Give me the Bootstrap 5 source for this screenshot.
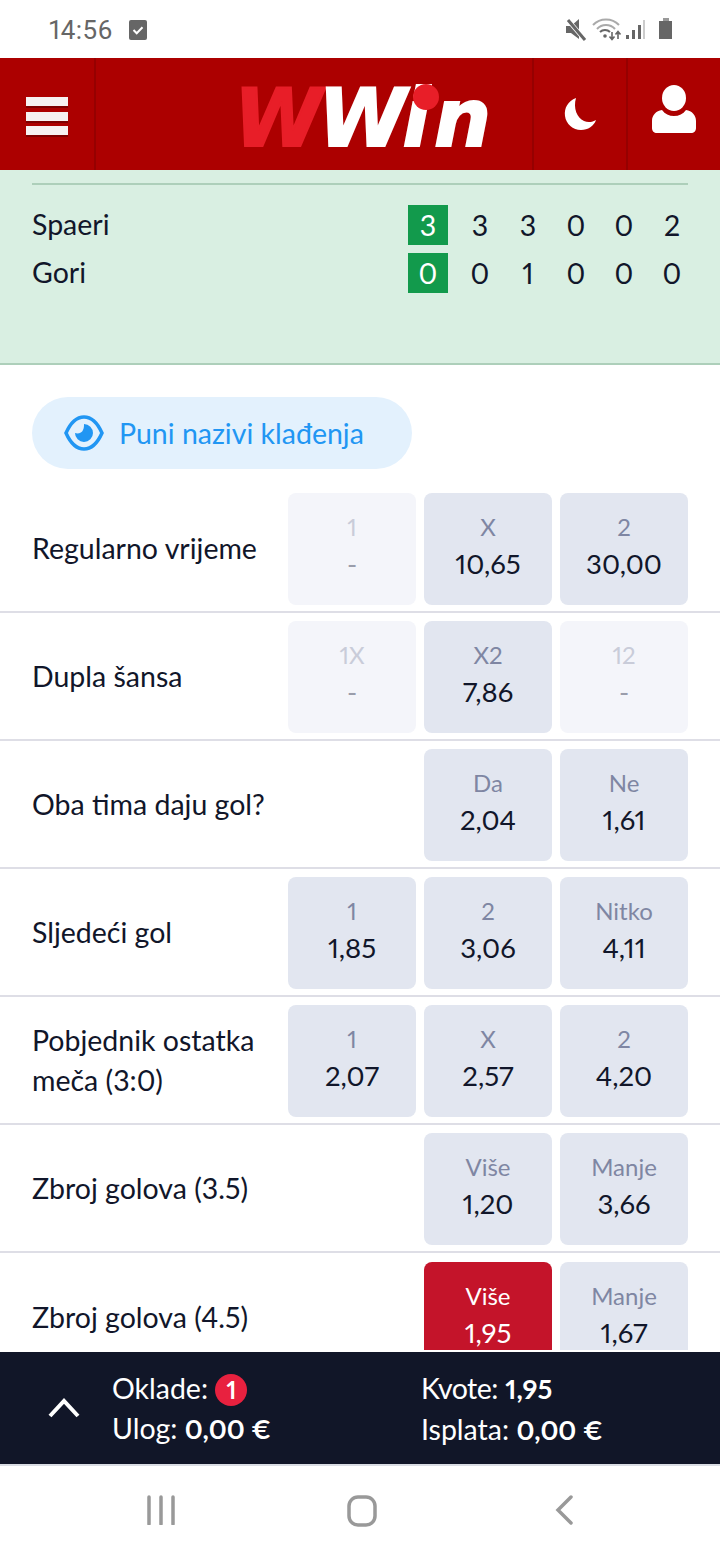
<!DOCTYPE html>
<html lang="hr">
<head>
  <meta charset="UTF-8" />
  <meta name="viewport" content="width=device-width, initial-scale=1.0" />
  <title>WWin</title>
  <link href="https://cdn.jsdelivr.net/npm/bootstrap@5.3.3/dist/css/bootstrap.min.css" rel="stylesheet">
  <style>
    html, body { height: 1560px; overflow: hidden; }
    body { width: 720px; font-family: Lato, "Noto Sans", sans-serif; font-size: 28.5px; line-height: 40px; font-variant-numeric: proportional-nums; color: #11162a; background: #fff; }

    .status-bar { height: 58px; padding: 2px 47px 0 49px; color: #666; font-family: Roboto, sans-serif; font-size: 26px; letter-spacing: .4px; }
    .status-bar svg { display: block; }

    .top-bar { height: 112px; background: #ac0000; }
    .top-cell { width: 94px; height: 112px; flex: none; border-left: 2px solid #960000; }
    .top-cell.menu { border-left: 0; }
    .brand-cell { flex: 1; border-left: 2px solid #960000; padding-left: 138px; }
    .brand { position: relative; display: block; margin-top: 10px; font-family: "DejaVu Sans", sans-serif; font-weight: 700; font-style: italic; font-size: 80px; line-height: 60px; letter-spacing: -4px; color: #fff; -webkit-text-stroke: 2px currentColor; }
    .brand b { color: #e81e28; font-weight: 700; }
    .brand em { letter-spacing: 4px; }
    .brand i { position: absolute; left: 179px; top: -5px; width: 26px; height: 26px; border-radius: 50%; background: #e81e28; }
    .menu svg { margin: 6px 0 0 26px; }
    .user-icon { margin-bottom: 10px; }

    .score-panel { height: 195px; background: #d9efe2; border-bottom: 2px solid #adcfba; padding: 13px 32px 0; }
    .score-line { height: 2px; background: #adcfba; margin-bottom: 20px; }
    .score-row { height: 40px; margin-bottom: 8px; margin-right: -8px; }
    .score-name { flex: 1; margin-top: -1px; }
    .score-box { width: 40px; height: 40px; margin-right: 8px; background: #129a4c; color: #fff; text-align: center; }
    .score-num { width: 48px; text-align: center; }

    .names-btn { width: 380px; height: 72px; margin: 32px 0 16px 32px; padding-left: 32px; gap: 15px; border-radius: 36px; background: #e3f1fd; color: #2196f3; }

    .markets { flex: 1; min-height: 0; overflow: hidden; margin-bottom: 2px; }
    .market-row { height: 128px; padding: 0 32px; border-bottom: 2px solid #dedee6; }
    .market-row:last-child { border-bottom: 0; }
    .market-name { flex: 1; line-height: 40px; }
    .odds { width: 128px; height: 112px; flex: none; margin: 8px 0 6px 8px; padding-top: 16px; border-radius: 8px; background: #e2e6f0; text-align: center; font-size: 27.500px; line-height: 38px; }
    .odds span { display: block; font-size: 24px; line-height: 36px; color: #7f86a3; }
    .odds.off { background: #f4f5fa; color: #9a9dab; }
    .odds.off span { color: #c9ccd9; }
    .odds.picked { background: #c4142a; color: #fff; }
    .odds.picked span { color: #fff; }

    .slip-bar { height: 114px; flex: none; background: #111628; color: #fff; border-bottom: 2px solid #dadde4; padding-top: 16px; }
    .slip-arrow { width: 112px; flex: none; padding: 30px 0 0 48px; }
    .slip-col { width: 309px; flex: none; }
    .slip-bar b { font-weight: 700; font-size: 27px; }
    .slip-tight { letter-spacing: -.5px; }
    .slip-count { display: inline-block; width: 32px; height: 32px; border-radius: 50%; background: #e8213f; font-size: 24px; font-weight: 700; line-height: 32px; text-align: center; }

    .nav-bar { height: 94px; flex: none; padding: 29px 0 0 147px; }
    .nav-bar svg { display: block; }
    .nav-home { margin-left: 172px; }
    .nav-back { margin-left: 178px; }
  </style>
</head>
<body class="d-flex flex-column">

  <div class="status-bar d-flex align-items-center flex-shrink-0">
    <span>14:56</span>
    <svg class="ms-3" width="18" height="20" viewBox="0 0 18 20"><rect width="18" height="20" rx="2" fill="#666"/><path d="M4.500 10l3.200 3.200 5.800-6" fill="none" stroke="#fff" stroke-width="2"/></svg>
    <svg class="ms-auto" width="108" height="24" viewBox="0 0 108 24">
      <path d="M1 8h5l8-7v20l-8-6H1z" fill="#666"/><path d="M2 1l18 21" stroke="#fff" stroke-width="4.500"/><path d="M3 2l17 20" stroke="#666" stroke-width="3"/>
      <path d="M28 7a18 18 0 0 1 26 0M32 11a12 12 0 0 1 18 0" fill="none" stroke="#aaa" stroke-width="2"/><path d="M35 14a7 7 0 0 1 10 0" fill="none" stroke="#666" stroke-width="2"/><circle cx="40" cy="18" r="1.800" fill="#666"/>
      <path d="M47 14v7M44.500 18.500l2.500 3 2.500-3M53 21v-7M50.500 16.500l2.500-3 2.500 3" fill="none" stroke="#666" stroke-width="1.600"/>
      <path d="M61 17h3v4h-3zM67 12h3v9h-3zM73 7h3v14h-3z" fill="#666"/><path d="M78 2h2v19h-2z" fill="#ccc"/>
      <path d="M98 0h6v3h-6z" fill="#999"/><path d="M94 3h13v18H94z" fill="#666"/>
    </svg>
  </div>

  <header class="top-bar d-flex flex-shrink-0">
    <div class="top-cell menu d-flex align-items-center">
      <svg width="42" height="42" viewBox="0 0 42 42"><path d="M0 1h42v9H0zM0 16h42v9H0zM0 30h42v9H0z" fill="#7d0000" transform="translate(0 2)"/><path d="M0 1h42v9H0zM0 16h42v9H0zM0 30h42v9H0z" fill="#f6f1f1"/></svg>
    </div>
    <div class="brand-cell d-flex align-items-center">
      <span class="brand"><b>W</b>W<em>i</em>n<i></i></span>
    </div>
    <div class="top-cell d-flex align-items-center justify-content-center">
      <svg width="34" height="34" viewBox="0 0 34 34"><path d="M13 1C5 4 1 11 2 19c1 8 8 14 16 14 7 0 13-4 15-10-3 2-8 3-12 1C14 21 10 11 13 1z" fill="#fff"/></svg>
    </div>
    <div class="top-cell d-flex align-items-center justify-content-center">
      <svg class="user-icon" width="44" height="48" viewBox="0 0 44 48"><ellipse cx="22" cy="13" rx="12" ry="13" fill="#fff"/><path d="M10 25c3 4 7 6 12 6s9-2 12-6c6 1 10 5 10 11v7c0 3-2 5-5 5H5c-3 0-5-2-5-5v-7c0-6 4-10 10-11z" fill="#fff"/></svg>
    </div>
  </header>

  <section class="score-panel flex-shrink-0">
    <div class="score-line"></div>
    <div class="score-row d-flex">
      <div class="score-name">Spaeri</div>
      <div class="score-box">3</div>
      <div class="score-num">3</div><div class="score-num">3</div><div class="score-num">0</div><div class="score-num">0</div><div class="score-num">2</div>
    </div>
    <div class="score-row d-flex">
      <div class="score-name">Gori</div>
      <div class="score-box">0</div>
      <div class="score-num">0</div><div class="score-num">1</div><div class="score-num">0</div><div class="score-num">0</div><div class="score-num">0</div>
    </div>
  </section>

  <div class="names-btn d-flex align-items-center flex-shrink-0">
    <svg width="40" height="36" viewBox="0 0 40 36"><path d="M2 18C6 9 12 2 20 2s14 7 18 16c-4 9-10 16-18 16S6 27 2 18z" fill="none" stroke="#2196f3" stroke-width="3.500"/><path d="M20 9a9 9 0 1 1-9 9c3 1 7 0 8-3 1-2 1-4 1-6z" fill="#2196f3"/></svg>
    <span>Puni nazivi klađenja</span>
  </div>

  <main class="markets">
    <div class="market-row d-flex align-items-center">
      <div class="market-name">Regularno vrijeme</div>
      <div class="odds off"><span>1</span>-</div><div class="odds"><span>X</span>10,65</div><div class="odds"><span>2</span>30,00</div>
    </div>
    <div class="market-row d-flex align-items-center">
      <div class="market-name">Dupla šansa</div>
      <div class="odds off"><span>1X</span>-</div><div class="odds"><span>X2</span>7,86</div><div class="odds off"><span>12</span>-</div>
    </div>
    <div class="market-row d-flex align-items-center">
      <div class="market-name">Oba tima daju gol?</div>
      <div class="odds"><span>Da</span>2,04</div><div class="odds"><span>Ne</span>1,61</div>
    </div>
    <div class="market-row d-flex align-items-center">
      <div class="market-name">Sljedeći gol</div>
      <div class="odds"><span>1</span>1,85</div><div class="odds"><span>2</span>3,06</div><div class="odds"><span>Nitko</span>4,11</div>
    </div>
    <div class="market-row d-flex align-items-center">
      <div class="market-name">Pobjednik ostatka meča (3:0)</div>
      <div class="odds"><span>1</span>2,07</div><div class="odds"><span>X</span>2,57</div><div class="odds"><span>2</span>4,20</div>
    </div>
    <div class="market-row d-flex align-items-center">
      <div class="market-name">Zbroj golova (3.5)</div>
      <div class="odds"><span>Više</span>1,20</div><div class="odds"><span>Manje</span>3,66</div>
    </div>
    <div class="market-row d-flex align-items-center">
      <div class="market-name">Zbroj golova (4.5)</div>
      <div class="odds picked"><span>Više</span>1,95</div><div class="odds"><span>Manje</span>1,67</div>
    </div>
  </main>

  <footer class="slip-bar d-flex">
    <div class="slip-arrow">
      <svg width="32" height="20" viewBox="0 0 32 20" class="d-block"><path d="M2 18L16 3l14 15" fill="none" stroke="#fff" stroke-width="4"/></svg>
    </div>
    <div class="slip-col">
      <div>Oklade: <span class="slip-count">1</span></div>
      <div>Ulog: <b>0,00 €</b></div>
    </div>
    <div class="slip-col">
      <div><span class="slip-tight">Kvote:</span> <b>1,95</b></div>
      <div>Isplata: <b>0,00 €</b></div>
    </div>
  </footer>

  <nav class="nav-bar d-flex align-items-start">
    <svg width="28" height="30" viewBox="0 0 28 30"><path d="M2 2v27M14 2v27M26 2v27" stroke="#999" stroke-width="3.500" stroke-linecap="round"/></svg>
    <svg class="nav-home" width="30" height="32" viewBox="0 0 30 32"><rect x="2" y="2" width="26" height="28" rx="9" fill="none" stroke="#999" stroke-width="3.500"/></svg>
    <svg class="nav-back" width="18" height="30" viewBox="0 0 18 30"><path d="M16 2L3 15l13 13" fill="none" stroke="#999" stroke-width="3.500" stroke-linecap="round"/></svg>
  </nav>

</body>
</html>
